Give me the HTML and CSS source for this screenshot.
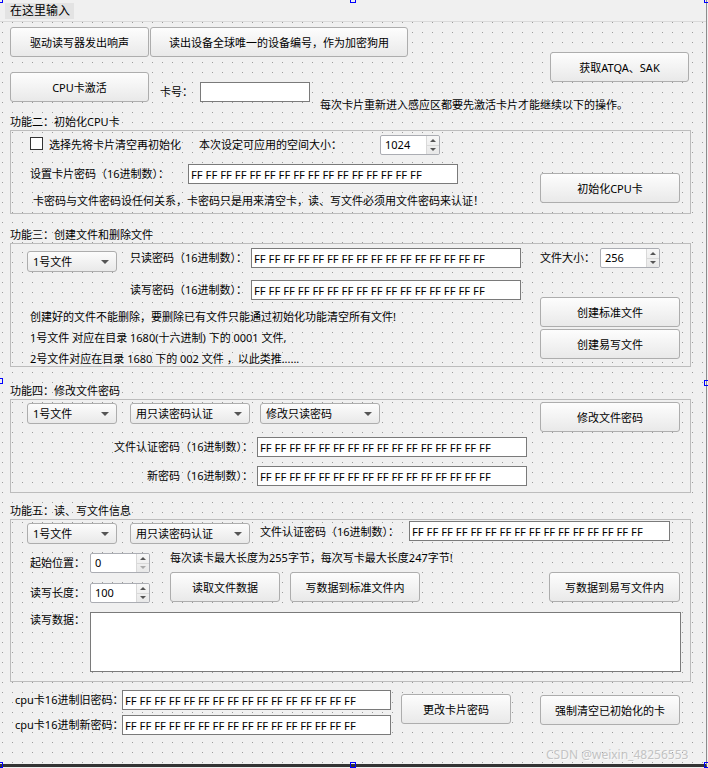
FILE: index.html
```html
<!DOCTYPE html>
<html lang="zh-CN">
<head>
<meta charset="utf-8">
<title>CPU卡</title>
<link rel="stylesheet" href="styles.css">
</head>
<body>
<div class="form">
  <div class="menubar"><span class="menu-item">在这里输入</span></div>

  <div class="top">
    <button class="btn btn-beep">驱动读写器发出响声</button>
    <button class="btn btn-uid">读出设备全球唯一的设备编号，作为加密狗用</button>
    <button class="btn btn-atqa">获取ATQA、SAK</button>
    <button class="btn btn-cpu">CPU卡激活</button>
    <span class="lbl lbl-card">卡号：</span>
    <input class="edit edit-card" type="text" value="">
    <span class="lbl lbl-note">每次卡片重新进入感应区都要先激活卡片才能继续以下的操作。</span>
  </div>

  <section class="group g2">
    <div class="gtitle">功能二：初始化CPU卡</div>
    <div class="frame f2">
      <div class="fleft">
        <div class="row r2a">
          <span class="check"></span>
          <span class="lbl">选择先将卡片清空再初始化</span>
          <span class="lbl">本次设定可应用的空间大小：</span>
          <div class="spin w60"><span class="spin-val">1024</span><span class="spin-arrows"><span class="sa up"></span><span class="sa down"></span></span></div>
        </div>
        <div class="row r2b">
          <span class="lbl">设置卡片密码（16进制数）：</span>
          <input class="edit w270" type="text" value="FF FF FF FF FF FF FF FF FF FF FF FF FF FF FF FF">
        </div>
        <div class="lbl r2c">卡密码与文件密码设任何关系，卡密码只是用来清空卡，读、写文件必须用文件密码来认证！</div>
      </div>
      <div class="fright">
        <button class="btn w140 mt42">初始化CPU卡</button>
      </div>
    </div>
  </section>

  <section class="group g3">
    <div class="gtitle">功能三：创建文件和删除文件</div>
    <div class="frame f3">
      <div class="fleft">
        <div class="row r3a">
          <div class="combo w90 mt3">1号文件</div>
          <span class="lbl mt3">只读密码（16进制数）：</span>
          <input class="edit w270" type="text" value="FF FF FF FF FF FF FF FF FF FF FF FF FF FF FF FF">
        </div>
        <div class="row r3b">
          <span class="lbl">读写密码（16进制数）：</span>
          <input class="edit w270" type="text" value="FF FF FF FF FF FF FF FF FF FF FF FF FF FF FF FF">
        </div>
        <div class="r3c">
          <div class="lbl">创建好的文件不能删除，要删除已有文件只能通过初始化功能清空所有文件!</div>
          <div class="lbl">1号文件 对应在目录 1680(十六进制) 下的 0001 文件,</div>
          <div class="lbl">2号文件对应在目录 1680 下的 002 文件 ，以此类推......</div>
        </div>
      </div>
      <div class="fright">
        <div class="row r3d">
          <span class="lbl">文件大小：</span>
          <div class="spin w60"><span class="spin-val">256</span><span class="spin-arrows"><span class="sa up"></span><span class="sa down"></span></span></div>
        </div>
        <button class="btn w140 mt29">创建标准文件</button>
        <button class="btn w140 mt2">创建易写文件</button>
      </div>
    </div>
  </section>

  <section class="group g4">
    <div class="gtitle">功能四：修改文件密码</div>
    <div class="frame f4">
      <div class="fleft">
        <div class="row r4a">
          <div class="combo w90">1号文件</div>
          <div class="combo w120">用只读密码认证</div>
          <div class="combo w120">修改只读密码</div>
        </div>
        <div class="row r4b">
          <span class="lbl lbl-right">文件认证密码（16进制数）：</span>
          <input class="edit w270" type="text" value="FF FF FF FF FF FF FF FF FF FF FF FF FF FF FF FF">
        </div>
        <div class="row r4c">
          <span class="lbl lbl-right">新密码（16进制数）：</span>
          <input class="edit w270" type="text" value="FF FF FF FF FF FF FF FF FF FF FF FF FF FF FF FF">
        </div>
      </div>
      <div class="fright">
        <button class="btn w140 mt2">修改文件密码</button>
      </div>
    </div>
  </section>

  <section class="group g5">
    <div class="gtitle">功能五：读、写文件信息</div>
    <div class="frame f5">
      <div class="row r5a">
        <div class="combo w90 mt2">1号文件</div>
        <div class="combo w120 mt2">用只读密码认证</div>
        <span class="lbl mt4">文件认证密码（16进制数）：</span>
        <input class="edit w261" type="text" value="FF FF FF FF FF FF FF FF FF FF FF FF FF FF FF FF">
      </div>
      <div class="b5">
        <div class="b5-left">
          <div class="row r5s">
            <span class="lbl">起始位置：</span>
            <div class="spin w60"><span class="spin-val">0</span><span class="spin-arrows"><span class="sa up"></span><span class="sa down dim"></span></span></div>
          </div>
          <div class="row r5s mt10">
            <span class="lbl">读写长度：</span>
            <div class="spin w60"><span class="spin-val">100</span><span class="spin-arrows"><span class="sa up"></span><span class="sa down"></span></span></div>
          </div>
        </div>
        <div class="b5-right">
          <div class="lbl">每次读卡最大长度为255字节，每次写卡最大长度247字节!</div>
          <div class="b5-btns">
            <button class="btn w110">读取文件数据</button>
            <button class="btn w130 ml10">写数据到标准文件内</button>
            <button class="btn w131 ml129">写数据到易写文件内</button>
          </div>
        </div>
      </div>
      <div class="row r5c">
        <span class="lbl mt1">读写数据：</span>
        <textarea class="memo"></textarea>
      </div>
    </div>
  </section>

  <div class="bottom">
    <div class="bottom-left">
      <span class="lbl">cpu卡16进制旧密码：</span>
      <input class="edit w269" type="text" value="FF FF FF FF FF FF FF FF FF FF FF FF FF FF FF FF">
      <span class="lbl">cpu卡16进制新密码：</span>
      <input class="edit w269" type="text" value="FF FF FF FF FF FF FF FF FF FF FF FF FF FF FF FF">
    </div>
    <button class="btn w110 btn-chg">更改卡片密码</button>
    <button class="btn w140 btn-clear">强制清空已初始化的卡</button>
  </div>

  <div class="watermark">CSDN @weixin_48256553</div>
</div>

<span class="handle h-tl"></span>
<span class="handle h-tm"></span>
<span class="handle h-tr"></span>
<span class="handle h-ml"></span>
<span class="handle h-mr"></span>
<span class="handle h-bl"></span>
<span class="handle h-bm"></span>
<span class="handle h-br"></span>
</body>
</html>
```

FILE: styles.css
```css
* { box-sizing: border-box; }

html, body {
  margin: 0;
  padding: 0;
}

body {
  width: 708px;
  height: 768px;
  overflow: hidden;
  position: relative;
  background: #f0f0f0;
  font-family: "Noto Sans", "Noto Sans CJK SC", sans-serif;
  font-size: 11px;
  color: #000;
}

.form {
  position: relative;
  width: 707px;
  height: 767px;
  border-right: 1px solid #8c8c8c;
  border-bottom: 3px solid #333;
  background:
    conic-gradient(from 270deg at 1px 1px, #9c9c9c 25%, transparent 0) 2px 2px / 10px 10px,
    #f0f0f0;
}

/* menubar */
.menubar {
  height: 22px;
  background: #f0f0f0;
  border-bottom: 1px solid #d9d9d9;
  padding: 3px 0 0 5px;
}
.menu-item {
  display: inline-block;
  height: 16px;
  padding: 0 4px 0 5px;
  background: #e3e3e3;
  font-size: 12px;
  line-height: 16px;
}

/* generic widgets */
.lbl {
  line-height: 14px;
  white-space: nowrap;
}
.lbl-right { text-align: right; }

.btn {
  height: 30px;
  margin: 0;
  padding: 0;
  border: 1px solid #adadad;
  border-radius: 3px;
  background: linear-gradient(#fdfdfd, #e9e9e9);
  font: inherit;
  color: #000;
  display: flex;
  align-items: center;
  justify-content: center;
  white-space: nowrap;
}

.edit {
  height: 20px;
  margin: 0;
  padding: 0 2px;
  border: 1px solid #7a7a7a;
  background: #fff;
  font-family: inherit;
  font-size: 11.25px;
  color: #000;
  outline: none;
}

.spin {
  height: 20px;
  border: 1px solid #abadb3;
  border-radius: 2px;
  background: #fff;
  display: flex;
}
.spin-val {
  flex: 1;
  padding-left: 4px;
  line-height: 17px;
}
.spin-arrows {
  width: 13px;
  border-left: 1px solid #d9d9d9;
  background: linear-gradient(#f7f7f7, #e8e8e8);
  display: flex;
  flex-direction: column;
  border-radius: 0 2px 2px 0;
}
.sa {
  flex: 1;
  display: flex;
  align-items: center;
  justify-content: center;
}
.sa.up { border-bottom: 1px solid #d9d9d9; }
.sa.up::before {
  content: "";
  border-left: 3px solid transparent;
  border-right: 3px solid transparent;
  border-bottom: 3px solid #555;
}
.sa.down::before {
  content: "";
  border-left: 3px solid transparent;
  border-right: 3px solid transparent;
  border-top: 3px solid #555;
}
.sa.dim::before { border-top-color: #aaa; }

.combo {
  height: 21px;
  border: 1px solid #adadad;
  border-radius: 3px;
  background: linear-gradient(#fcfcfc, #e9e9e9);
  padding: 0 7px 0 5px;
  display: flex;
  align-items: center;
  justify-content: space-between;
  white-space: nowrap;
  line-height: 14px;
}
.combo::after {
  content: "";
  border-left: 4px solid transparent;
  border-right: 4px solid transparent;
  border-top: 4px solid #555;
}

.check {
  width: 13px;
  height: 13px;
  border: 1px solid #333;
  background: #fff;
  align-self: start;
  margin-top: 2px;
}

.memo {
  display: block;
  width: 591px;
  height: 60px;
  margin: 0;
  border: 1px solid #7a7a7a;
  background: #fff;
  resize: none;
  font: inherit;
  outline: none;
}

/* sizes & offsets */
.w60 { width: 60px; }
.w90 { width: 90px; }
.w110 { width: 110px; }
.w120 { width: 120px; }
.w130 { width: 130px; }
.w131 { width: 131px; }
.w140 { width: 140px; }
.w261 { width: 261px; }
.w269 { width: 269px; }
.w270 { width: 270px; }
.mt1 { margin-top: 1px; }
.mt2 { margin-top: 2px; }
.mt3 { margin-top: 3px; }
.mt4 { margin-top: 4px; }
.mt10 { margin-top: 10px; }
.mt29 { margin-top: 29px; }
.mt42 { margin-top: 42px; }
.ml10 { margin-left: 10px; }
.ml129 { margin-left: 129px; }

/* top area */
.top {
  display: grid;
  grid-template-columns: 10px 140px 10px 40px 110px 10px 230px 140px;
  grid-template-rows: 25px 5px 15px 10px 16px 4px 10px;
  padding-top: 5px;
}
.btn-beep { grid-column: 2; grid-row: 1 / 3; width: 139px; }
.btn-uid { grid-column: 3 / 8; grid-row: 1 / 3; width: 258px; justify-self: start; }
.btn-atqa { grid-column: 8; grid-row: 2 / 5; width: 139px; }
.btn-cpu { grid-column: 2; grid-row: 4 / 7; width: 139px; }
.lbl-card { grid-column: 4; grid-row: 5 / 7; align-self: center; }
.edit-card { grid-column: 5; grid-row: 5 / 7; width: 110px; }
.lbl-note { grid-column: 7 / 9; grid-row: 6 / 8; }

/* groups */
.group {
  margin-left: 10px;
  width: 681px;
}
.gtitle {
  height: 16px;
  line-height: 16px;
  white-space: nowrap;
}
.frame {
  border: 1px solid #bcbcbc;
  display: flex;
}
.fleft { width: 529px; flex: none; }
.fright { width: 140px; flex: none; display: flex; flex-direction: column; }

.row { display: grid; align-items: center; }

.g2 { margin-top: 2px; }
.f2 { height: 84px; }
.r2a { margin-top: 4px; padding-left: 19px; height: 20px; grid-template-columns: 19px 150px 181px 60px; }
.r2b { margin-top: 9px; padding-left: 19px; grid-template-columns: 158px 270px; }
.r2c { margin-top: 10px; padding-left: 22px; }

.g3 { margin-top: 13px; }
.f3 { height: 124px; }
.r3a { margin-top: 4px; padding-left: 16px; grid-template-columns: 103px 121px 270px; align-items: start; }
.r3b { margin-top: 8px; padding-left: 119px; grid-template-columns: 121px 270px; }
.r3c { margin-top: 6px; padding-left: 19px; }
.r3c .lbl { line-height: 21px; }
.r3d { margin-top: 4px; height: 20px; grid-template-columns: 60px 60px; }

.g4 { margin-top: 16px; }
.f4 { height: 94px; }
.r4a { margin-top: 3px; padding-left: 16px; grid-template-columns: 103px 130px 120px; }
.r4b { margin-top: 13px; grid-template-columns: 242px 270px; column-gap: 4px; }
.r4c { margin-top: 9px; grid-template-columns: 242px 270px; column-gap: 4px; }

.g5 { margin-top: 10px; }
.f5 { height: 163px; flex-direction: column; }
.r5a { margin-top: 1px; padding-left: 16px; grid-template-columns: 103px 130px 149px 261px; align-items: start; }
.b5 { display: flex; margin-top: 7px; }
.b5-left { width: 159px; padding-left: 19px; padding-top: 2px; }
.r5s { height: 20px; grid-template-columns: 60px 60px; }
.b5-btns { display: flex; margin-top: 7px; }
.r5c { margin-top: 9px; padding-left: 19px; grid-template-columns: 60px 591px; align-items: start; }

/* bottom */
.bottom {
  display: flex;
  align-items: flex-start;
  margin-top: 8px;
}
.bottom-left {
  padding-left: 15px;
  display: grid;
  grid-template-columns: 107px 269px;
  row-gap: 5px;
  align-items: center;
}
.btn-chg { margin-left: 10px; margin-top: 4px; }
.btn-clear { margin-left: 29px; margin-top: 5px; }

.watermark {
  position: absolute;
  left: 546px;
  top: 748px;
  font-family: "Noto Sans", sans-serif;
  font-size: 12px;
  line-height: 14px;
  color: #c4c4c4;
  text-shadow: 1px 1px 0 #fafafa;
  white-space: nowrap;
}

/* designer selection handles */
.handle {
  position: absolute;
  width: 6px;
  height: 6px;
  border: 1px solid #0000ff;
}
.h-tl { left: -3px; top: -3px; }
.h-tm { left: 350px; top: -3px; }
.h-tr { left: 704px; top: -3px; }
.h-ml { left: -3px; top: 378px; }
.h-mr { left: 704px; top: 380px; }
.h-bl { left: -3px; top: 762px; }
.h-bm { left: 350px; top: 762px; }
.h-br { left: 704px; top: 762px; }
```
